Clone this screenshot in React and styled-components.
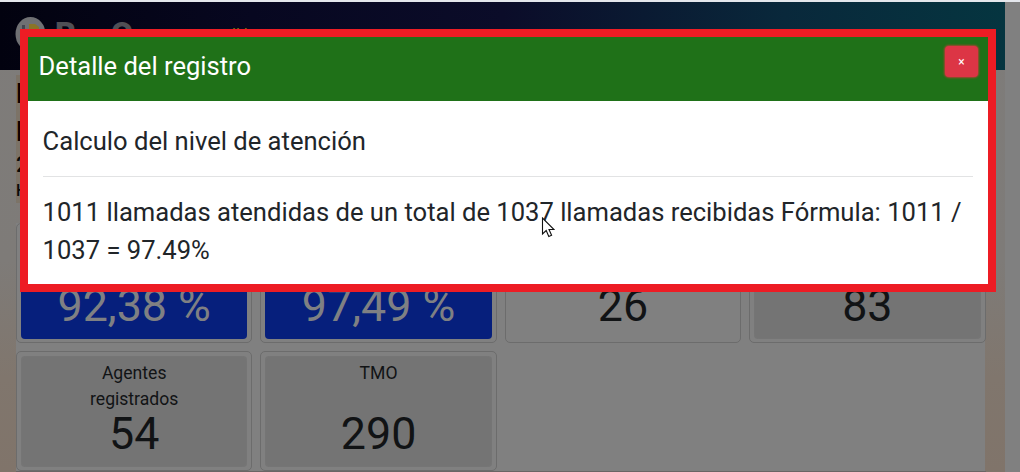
import React from "react";
import styled, { createGlobalStyle } from "styled-components";

const Global = createGlobalStyle`
  * { box-sizing: border-box; }
  body { margin: 0; overflow: hidden; font-family: Roboto, "Liberation Sans", sans-serif; color: #111315; }
`;

const Screen = styled.div`
  position: relative;
  width: 1020px;
  height: 472px;
  overflow: hidden;
  padding-right: 15px;
  border-top: 2px solid #e4e7ec;
  background: #808080;
`;

const Page = styled.div`
  height: 470px;
  display: flex;
  flex-direction: column;
  background: linear-gradient(180deg, #7e7c7a 0, #7e7b78 55%, #80766d 80%, #80746a 100%);
`;

const Navbar = styled.header`
  height: 68px;
  flex: none;
  display: flex;
  align-items: flex-start;
  padding: 15px 0 0 15px;
  background: linear-gradient(90deg, #02020f 0, #070720 25%, #0b0c29 50%, #09283b 78%, #053540 100%);
`;

const Brand = styled.div`
  width: 217px;
  display: flex;
  gap: 9px;
  color: #4f4f55;
  font-weight: 900;
  font-size: 32px;
  line-height: 32px;
`;

const BrandName = styled.span`
  display: flex;
  gap: 35px;
`;

const NavLinks = styled.nav`
  display: flex;
  gap: 4px;
  padding-top: 7px;
  color: #80740c;
  font-size: 16px;
  line-height: 22px;
`;

const Content = styled.main`
  flex: 1;
  margin: 0 20px 0 16px;
`;

const Intro = styled.section`
  height: 153px;
  padding-top: 5px;
`;

const Heading = styled.div`
  width: 300px;
  height: ${(p) => p.$h}px;
  background: #7c7367;
  color: ${(p) => p.$color || "#100000"};
  font-size: ${(p) => p.$size}px;
  font-weight: ${(p) => p.$weight || 700};
  line-height: ${(p) => p.$h}px;
`;

const Grid = styled.section`
  display: grid;
  grid-template-columns: repeat(4, 236.4px);
  grid-template-rows: 120px 120px 40px;
  column-gap: 8px;
  row-gap: 8px;
  background: #808080;
`;

const Card = styled.article`
  padding: 4px;
  border: 1px solid #6c6c6c;
  border-radius: 5px;
`;

const tones = {
  blue: "#061f7c",
  gray: "#747474",
  plain: "#808080",
};

const Tile = styled.div`
  height: 111px;
  display: flex;
  flex-direction: column;
  align-items: center;
  justify-content: space-between;
  padding: 4px 0 11px;
  border-radius: 4px;
  background: ${(p) => tones[p.$tone]};
  color: ${(p) => (p.$tone === "blue" ? "#7f8083" : "#111315")};
  box-shadow: ${(p) => (p.$tone === "gray" ? "inset 0 0 2px #7b7b7b" : "none")};
`;

const Label = styled.div`
  width: 110px;
  text-align: center;
  font-size: 17.6px;
  line-height: 26px;
`;

const Value = styled.div`
  font-size: 44.8px;
  line-height: 44px;
`;

const FooterRule = styled.div`
  grid-column: span 4;
  margin-top: -8px;
  border-top: 2px solid #6a6565;
`;

const Dialog = styled.div`
  position: absolute;
  left: 20px;
  top: 27px;
  width: 976px;
  height: 263px;
  border: 8px solid #ed1c24;
  background: #fff;
`;

const DialogHeader = styled.div`
  height: 64px;
  display: flex;
  justify-content: space-between;
  align-items: flex-start;
  padding: 10px 10px 0 10.6px;
  background: #1f7118;
`;

const Title = styled.h1`
  margin: 0;
  color: #fff;
  font-size: 25.55px;
  font-weight: 400;
  line-height: 38px;
`;

const Close = styled.button`
  width: 33px;
  height: 31px;
  margin-top: -1px;
  padding: 0;
  border: 0;
  border-radius: 4px;
  background: #dc3545;
  box-shadow: 0 0 2px 1px rgba(200, 60, 55, 0.8);
  color: #fff;
  font: 12px Roboto, sans-serif;
`;

const DialogBody = styled.div`
  padding: 21px 15px 0 14.6px;
  color: #212529;
  font-size: 25.58px;
  line-height: 38px;
`;

const Subtitle = styled.div`
  height: 55px;
  margin-bottom: 16px;
  border-bottom: 1px solid #e2e3e4;
`;

const Cursor = styled.svg`
  position: absolute;
  left: 541px;
  top: 215px;
`;

const cards = [
  { value: "92,38 %", tone: "blue" },
  { value: "97,49 %", tone: "blue" },
  { value: "26", tone: "plain" },
  { value: "83", tone: "gray" },
  { label: "Agentes registrados", value: "54", tone: "gray" },
  { label: "TMO", value: "290", tone: "gray" },
];

function Logo() {
  return (
    <svg width="31" height="34" viewBox="0 0 31 34">
      <ellipse cx="15.5" cy="17" rx="15" ry="17" fill="#6f7073" />
      <path d="M7 8h3v6H7z" fill="#454650" />
      <path d="M14 7h6l4 3v6H14z" fill="#8a7428" />
    </svg>
  );
}

export default function App() {
  return (
    <Screen>
      <Global />
      <Page>
        <Navbar>
          <Brand>
            <Logo />
            <BrandName>
              <span>R</span>
              <span>O</span>
            </BrandName>
          </Brand>
          <NavLinks>
            <span>ll</span>
            <span>l</span>
          </NavLinks>
        </Navbar>
        <Content>
          <Intro>
            <Heading $h={38} $size={28}>N</Heading>
            <Heading $h={38} $size={28}>N</Heading>
            <Heading $h={27} $size={22} $weight={500} $color="#080808">2</Heading>
            <Heading $h={25} $size={16} $weight={500} $color="#080808">H</Heading>
          </Intro>
          <Grid>
            {cards.map((c) => (
              <Card key={c.value}>
                <Tile $tone={c.tone}>
                  <Label>{c.label}</Label>
                  <Value>{c.value}</Value>
                </Tile>
              </Card>
            ))}
            <FooterRule />
          </Grid>
        </Content>
      </Page>
      <Dialog>
        <DialogHeader>
          <Title>Detalle del registro</Title>
          <Close>×</Close>
        </DialogHeader>
        <DialogBody>
          <Subtitle>Calculo del nivel de atención</Subtitle>
          <div>
            1011 llamadas atendidas de un total de 1037 llamadas recibidas Fórmula: 1011 / 1037 = 97.49%
          </div>
        </DialogBody>
      </Dialog>
      <Cursor width="14" height="22" viewBox="0 0 14 22">
        <path d="M1.5 1v16l3.7-3.5 2.6 6 2.8-1.2-2.6-5.8h5z" fill="#fff" stroke="#111" strokeWidth="1.1" />
      </Cursor>
    </Screen>
  );
}
